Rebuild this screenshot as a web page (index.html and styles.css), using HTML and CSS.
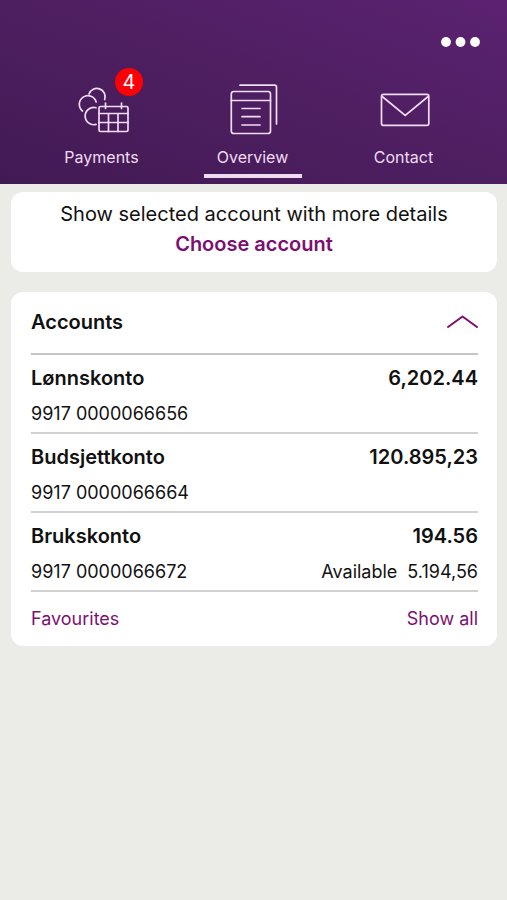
FILE: index.html
```html
<!DOCTYPE html>
<html lang="en">
<head>
  <meta charset="utf-8">
  <meta name="viewport" content="width=device-width, initial-scale=1">
  <title>Overview</title>
  <link rel="stylesheet" href="styles.css">
</head>
<body>
  <header class="header">
    <div class="topbar">
      <button class="more" type="button" aria-label="More">
        <svg width="40" height="12" viewBox="0 0 40 12" fill="currentColor" aria-hidden="true">
          <circle cx="6" cy="6" r="4.9"/><circle cx="20.5" cy="6" r="4.9"/><circle cx="35" cy="6" r="4.9"/>
        </svg>
      </button>
    </div>
    <nav class="tabs">
      <a class="tab" href="#payments">
        <span class="tab-icon">
          <svg width="61" height="56" viewBox="0 0 61 56" aria-hidden="true">
            <path d="M18 14a8.300 8.300 0 0 1 15.700 5.500"/>
            <path d="M11.500 31a8.600 8.600 0 1 1 13.700-9"/>
            <path d="M25 27.800a8.600 8.600 0 1 0 0 16.600"/>
            <rect x="28" y="26.500" width="29" height="25" rx="1.500"/>
            <path d="M28 33.500h29M28 42.500h29M37.500 33.500v18M47 33.500v18M34.500 23v5.500M50.500 23v5.500"/>
          </svg>
          <span class="badge">4</span>
        </span>
        <span class="tab-label">Payments</span>
      </a>
      <a class="tab tab-active" href="#overview" aria-current="page">
        <span class="tab-icon">
          <svg width="61" height="56" viewBox="0 0 61 56" aria-hidden="true">
            <path d="M18 5.200h34.500q2 0 2 2V44"/>
            <rect x="9.300" y="11.500" width="39.200" height="42" rx="2.500"/>
            <path d="M9.300 20.500h39.200M20 28.500h18M20 36.700h18M20 45h18"/>
          </svg>
        </span>
        <span class="tab-label">Overview</span>
      </a>
      <a class="tab" href="#contact">
        <span class="tab-icon">
          <svg width="61" height="56" viewBox="0 0 61 56" aria-hidden="true">
            <rect x="8.500" y="14.300" width="47.300" height="31" rx="1.800"/>
            <path d="M9.200 16.500l23 19 23-19"/>
          </svg>
        </span>
        <span class="tab-label">Contact</span>
      </a>
    </nav>
  </header>

  <main class="content">
    <section class="card choose">
      <p class="choose-text">Show selected account with more details</p>
      <a class="choose-link" href="#choose">Choose account</a>
    </section>

    <section class="card accounts">
      <div class="accounts-head">
        <h2 class="accounts-title">Accounts</h2>
        <button class="collapse" type="button" aria-label="Collapse accounts">
          <svg width="32" height="16" viewBox="0 0 32 16" fill="none" stroke="currentColor" stroke-width="2" aria-hidden="true">
            <path d="M2 13L16.500 2.500 31 13" stroke-linecap="round" stroke-linejoin="round"/>
          </svg>
        </button>
      </div>
      <ul class="account-list">
        <li class="account">
          <div class="row row-main"><span>Lønnskonto</span><span>6,202.44</span></div>
          <div class="row"><span>9917 0000066656</span></div>
        </li>
        <li class="account">
          <div class="row row-main"><span>Budsjettkonto</span><span>120.895,23</span></div>
          <div class="row"><span>9917 0000066664</span></div>
        </li>
        <li class="account">
          <div class="row row-main"><span>Brukskonto</span><span>194.56</span></div>
          <div class="row"><span>9917 0000066672</span><span class="available"><span>Available</span><span>5.194,56</span></span></div>
        </li>
      </ul>
      <div class="accounts-foot">
        <a href="#favourites">Favourites</a>
        <a href="#all">Show all</a>
      </div>
    </section>
  </main>
</body>
</html>
```
FILE: styles.css
```css
* {
  box-sizing: border-box;
}

body {
  margin: 0;
  min-height: 100vh;
  background: #ebebe7;
  color: #111;
  font-family: Inter, "Liberation Sans", sans-serif;
  font-size: 18px;
}

a {
  color: #7d0f70;
  text-decoration: none;
}

button {
  display: flex;
  padding: 0;
  border: 0;
  background: none;
  cursor: pointer;
}

.header {
  padding-bottom: 6px;
  background: linear-gradient(200deg, #5b2271 0%, #4f1f62 45%, #421a53 100%);
}

.topbar {
  display: flex;
  justify-content: flex-end;
  padding: 36px 27px 0;
}

.more {
  color: #fff;
}

.tabs {
  display: grid;
  grid-template-columns: repeat(3, 1fr);
  padding: 32px 28px 0 26px;
}

.tab {
  display: flex;
  flex-direction: column;
  align-items: center;
  color: #f0dcf4;
}

.tab::after {
  content: "";
  width: 98px;
  height: 4px;
  margin-top: 7px;
}

.tab-active::after {
  background: #eedcf2;
}

.tab-icon {
  position: relative;
  display: flex;
}

.tab-icon svg {
  fill: none;
  stroke: currentColor;
  stroke-width: 1.7;
  stroke-linecap: round;
}

.badge {
  position: absolute;
  top: -12px;
  left: 44px;
  width: 28px;
  border-radius: 50%;
  background: #fb0006;
  color: #fff;
  font-size: 20px;
  line-height: 28px;
  text-align: center;
}

.tab-label {
  margin-top: 11px;
  font-size: 16px;
  line-height: 20px;
}

.content {
  display: flex;
  flex-direction: column;
  gap: 20px;
  padding: 8px 10px 20px 11px;
}

.card {
  border-radius: 12px;
  background: #fff;
}

.choose {
  padding: 7px 20px 13px;
  font-size: 20px;
  line-height: 30px;
  text-align: center;
}

.choose-text {
  margin: 0;
}

.choose-link {
  display: block;
  font-weight: 600;
}

.accounts {
  padding: 0 19px 0 20px;
}

.accounts-head {
  display: flex;
  align-items: center;
  justify-content: space-between;
  padding-bottom: 1px;
  border-bottom: 2px solid #c6c6c6;
  line-height: 60px;
}

.accounts-title {
  margin: 0;
  font-size: 20px;
  font-weight: 600;
}

.collapse {
  color: #7d0f70;
}

.account-list {
  margin: 0;
  padding: 0;
  list-style: none;
}

.account {
  padding-top: 5px;
  border-bottom: 2px solid #d2d2d2;
}

.row {
  display: flex;
  justify-content: space-between;
  line-height: 36px;
}

.row-main {
  font-size: 20px;
  font-weight: 600;
}

.available {
  display: flex;
  gap: 10px;
}

.accounts-foot {
  display: flex;
  justify-content: space-between;
  line-height: 54px;
}
```
